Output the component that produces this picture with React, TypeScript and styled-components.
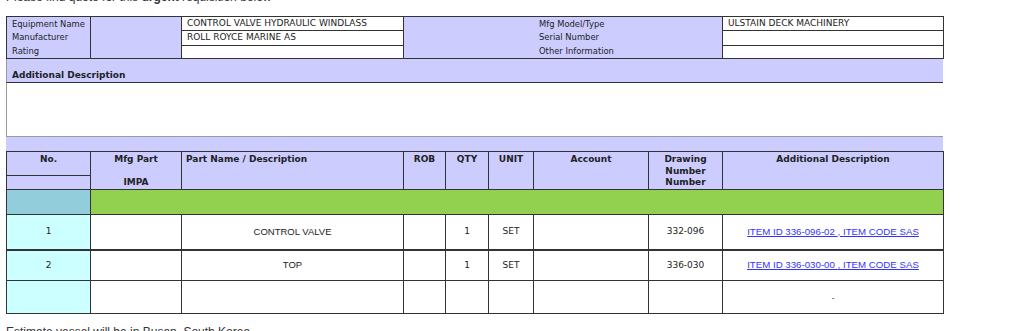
import React from "react";
import styled, { createGlobalStyle } from "styled-components";

const Colors = {
    lavender: "#ccccff",
    green: "#92d050",
    steel: "#92cddc",
    cyan: "#ccffff",
    line: "#333333",
    softLine: "#9a9a9a",
    text: "#222222",
    link: "#3333ff",
};

const GlobalStyle = createGlobalStyle`
    html, body {
        margin: 0;
        padding: 0;
        background: #ffffff;
        overflow: hidden;
    }
    body {
        font-family: "DejaVu Sans", Verdana, sans-serif;
        color: ${Colors.text};
    }
`;

const Page = styled.div`
    padding: 0 6px;
`;

const Intro = styled.p`
    margin: -10px 0 12px;
    font-family: "Liberation Sans", Arial, sans-serif;
    font-size: 12px;
    line-height: 14px;
    color: #333;
    b {
        font-weight: bold;
    }
`;

const Outro = styled(Intro)`
    margin: 11px 0 0;
`;

const Grid = styled.table`
    width: 937px;
    table-layout: fixed;
    border-collapse: collapse;
    font-size: 9px;
`;

const InfoCell = styled.td<{ $bg?: string; $pl?: number }>`
    background: ${({ $bg }) => $bg || "#fff"};
    border: 1px solid ${Colors.line};
    padding: 0 0 0 ${({ $pl }) => $pl ?? 5}px;
    height: 12px;
    line-height: 13px;
    vertical-align: top;
    white-space: nowrap;
    overflow: hidden;
`;

const LabelStack = styled.div`
    display: flex;
    flex-direction: column;
    font-size: 8.4px;
    line-height: 13.4px;
    padding-top: 1px;
`;

const DescBand = styled.div`
    width: 937px;
    height: 24px;
    box-sizing: border-box;
    background: ${Colors.lavender};
    border-left: 1px solid ${Colors.softLine};
    border-bottom: 1px solid ${Colors.line};
    display: flex;
    align-items: flex-end;
    padding-left: 5px;
    font-size: 9px;
    font-weight: bold;
    line-height: 13px;
`;

const DescBox = styled.div`
    width: 937px;
    height: 54px;
    box-sizing: border-box;
    border-left: 1px solid ${Colors.softLine};
    border-bottom: 1px solid ${Colors.softLine};
    background: #fff;
`;

const Spacer = styled.div`
    width: 937px;
    height: 14px;
    background: ${Colors.lavender};
`;

const Head = styled.th<{ $align?: string; $h?: number }>`
    background: ${Colors.lavender};
    border: 1px solid ${Colors.line};
    font-size: 9px;
    font-weight: bold;
    line-height: 11.5px;
    text-align: ${({ $align }) => $align || "center"};
    vertical-align: top;
    padding: 2px 4px 0;
    height: ${({ $h }) => ($h ? `${$h}px` : "auto")};
    box-sizing: border-box;
`;

const BandCell = styled.td<{ $bg: string }>`
    background: ${({ $bg }) => $bg};
    border: 1px solid ${Colors.line};
    height: 24px;
    padding: 0;
`;

const Cell = styled.td<{ $bg?: string; $arial?: boolean; $h: number; $heavy?: boolean }>`
    background: ${({ $bg }) => $bg || "#fff"};
    border: 1px solid ${Colors.line};
    border-bottom: ${({ $heavy }) => ($heavy ? `2px solid ${Colors.line}` : `1px solid ${Colors.line}`)};
    height: ${({ $h }) => $h}px;
    padding: 0 2px 2px;
    text-align: center;
    vertical-align: middle;
    font-family: ${({ $arial }) => ($arial ? `"Liberation Sans", Arial, sans-serif` : `"DejaVu Sans", Verdana, sans-serif`)};
    font-size: ${({ $arial }) => ($arial ? "9.5px" : "9px")};
    white-space: nowrap;
`;

const Link = styled.a`
    font-family: "Liberation Sans", Arial, sans-serif;
    font-size: 9.7px;
    color: ${Colors.link};
    text-decoration: underline;
`;

const Dash = styled.span`
    display: inline-block;
    padding-top: 4px;
    color: #555;
`;

type Part = {
    no: string;
    name: string;
    qty: string;
    unit: string;
    drawing: string;
    itemId: string;
};

const parts: Part[] = [
    { no: "1", name: "CONTROL VALVE", qty: "1", unit: "SET", drawing: "332-096", itemId: "336-096-02" },
    { no: "2", name: "TOP", qty: "1", unit: "SET", drawing: "336-030", itemId: "336-030-00" },
];

// content heights of the two item rows (padding adds the rest)
const rowHeights = [32, 27];

const EquipmentInfo = () => (
    <Grid>
        <colgroup>
            <col style={{ width: 84 }} />
            <col style={{ width: 91 }} />
            <col style={{ width: 222 }} />
            <col style={{ width: 319 }} />
            <col style={{ width: 221 }} />
        </colgroup>
        <tbody>
            <tr>
                <InfoCell rowSpan={3} $bg={Colors.lavender}>
                    <LabelStack>
                        <span>Equipment Name</span>
                        <span>Manufacturer</span>
                        <span>Rating</span>
                    </LabelStack>
                </InfoCell>
                <InfoCell rowSpan={3} $bg={Colors.lavender} />
                <InfoCell>CONTROL VALVE HYDRAULIC WINDLASS</InfoCell>
                <InfoCell rowSpan={3} $bg={Colors.lavender} $pl={135}>
                    <LabelStack>
                        <span>Mfg Model/Type</span>
                        <span>Serial Number</span>
                        <span>Other Information</span>
                    </LabelStack>
                </InfoCell>
                <InfoCell>ULSTAIN DECK MACHINERY</InfoCell>
            </tr>
            <tr>
                <InfoCell>ROLL ROYCE MARINE AS</InfoCell>
                <InfoCell />
            </tr>
            <tr>
                <InfoCell />
                <InfoCell />
            </tr>
        </tbody>
    </Grid>
);

const PartsTable = () => (
    <Grid>
        <colgroup>
            <col style={{ width: 84 }} />
            <col style={{ width: 91 }} />
            <col style={{ width: 222 }} />
            <col style={{ width: 42 }} />
            <col style={{ width: 43 }} />
            <col style={{ width: 45 }} />
            <col style={{ width: 115 }} />
            <col style={{ width: 74 }} />
            <col style={{ width: 221 }} />
        </colgroup>
        <thead>
            <tr>
                <Head $h={24}>No.</Head>
                <Head rowSpan={2}>
                    Mfg Part
                    <br />
                    <br />
                    IMPA
                </Head>
                <Head rowSpan={2} $align="left">Part Name / Description</Head>
                <Head rowSpan={2}>ROB</Head>
                <Head rowSpan={2}>QTY</Head>
                <Head rowSpan={2}>UNIT</Head>
                <Head rowSpan={2}>Account</Head>
                <Head rowSpan={2}>
                    Drawing
                    <br />
                    Number
                    <br />
                    Number
                </Head>
                <Head rowSpan={2}>Additional Description</Head>
            </tr>
            <tr>
                <Head $h={14} />
            </tr>
        </thead>
        <tbody>
            <tr>
                <BandCell $bg={Colors.steel} />
                <BandCell $bg={Colors.green} colSpan={8} />
            </tr>
            {parts.map((part, i) => {
                const h = rowHeights[i];
                const heavy = i === 0;
                return (
                    <tr key={part.no}>
                        <Cell $bg={Colors.cyan} $h={h} $heavy={heavy}>{part.no}</Cell>
                        <Cell $h={h} $heavy={heavy} />
                        <Cell $h={h} $heavy={heavy} $arial>{part.name}</Cell>
                        <Cell $h={h} $heavy={heavy} />
                        <Cell $h={h} $heavy={heavy}>{part.qty}</Cell>
                        <Cell $h={h} $heavy={heavy}>{part.unit}</Cell>
                        <Cell $h={h} $heavy={heavy} />
                        <Cell $h={h} $heavy={heavy}>{part.drawing}</Cell>
                        <Cell $h={h} $heavy={heavy}>
                            <Link href="#">{`ITEM ID ${part.itemId} `}</Link>
                            {" "}
                            <Link href="#">, ITEM CODE SAS</Link>
                        </Cell>
                    </tr>
                );
            })}
            <tr>
                <Cell $bg={Colors.cyan} $h={30} />
                <Cell $h={30} />
                <Cell $h={30} />
                <Cell $h={30} />
                <Cell $h={30} />
                <Cell $h={30} />
                <Cell $h={30} />
                <Cell $h={30} />
                <Cell $h={30}>
                    <Dash>-</Dash>
                </Cell>
            </tr>
        </tbody>
    </Grid>
);

const App = () => (
    <>
        <GlobalStyle />
        <Page>
            <Intro>
                Please find quote for this <b>urgent</b> requisition below
            </Intro>
            <EquipmentInfo />
            <DescBand>Additional Description</DescBand>
            <DescBox />
            <Spacer />
            <PartsTable />
            <Outro>Estimate vessel will be in Busan, South Korea</Outro>
        </Page>
    </>
);

export default App;
